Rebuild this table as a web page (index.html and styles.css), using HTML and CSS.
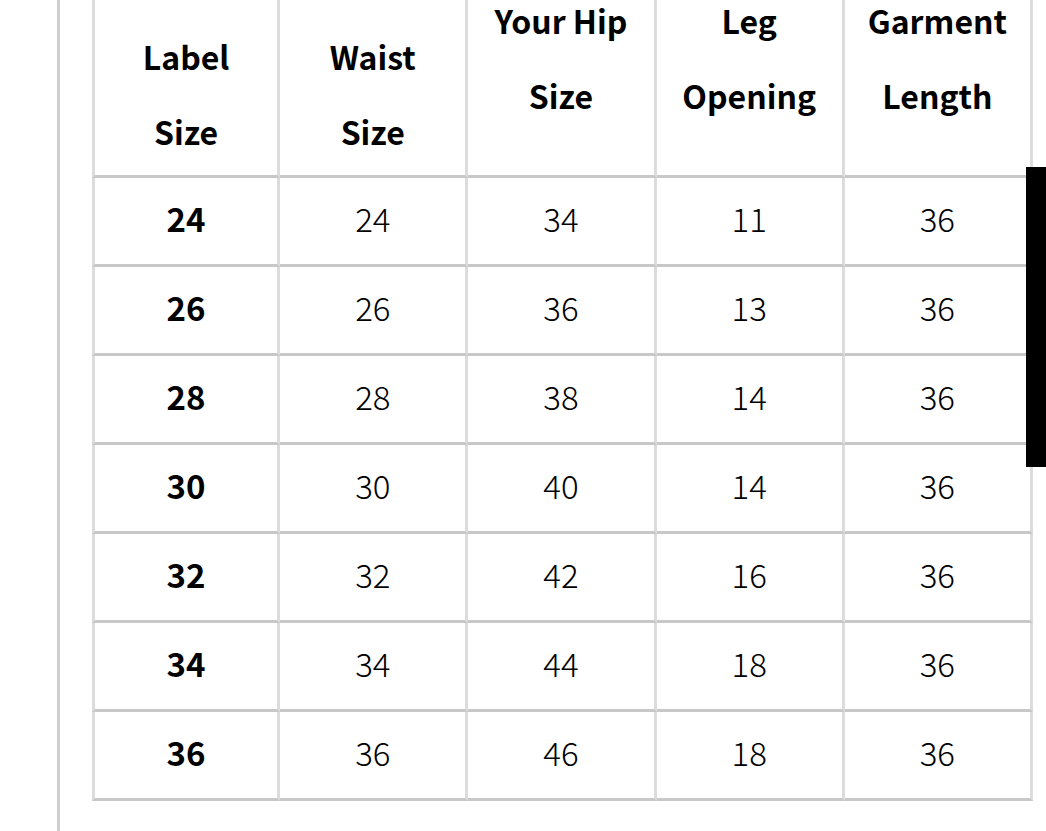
FILE: index.html
```html
<!DOCTYPE html>
<html lang="en">
<head>
<meta charset="utf-8">
<title>Size Chart</title>
<link rel="stylesheet" href="styles.css">
</head>
<body>
<div class="page">
  <table class="chart">
    <thead>
      <tr>
        <th class="low">Label<br>Size</th>
        <th class="low">Waist<br>Size</th>
        <th>Your Hip<br>Size</th>
        <th>Leg<br>Opening</th>
        <th>Garment<br>Length</th>
      </tr>
    </thead>
    <tbody>
      <tr><td class="lbl">24</td><td>24</td><td>34</td><td>11</td><td>36</td></tr>
      <tr><td class="lbl">26</td><td>26</td><td>36</td><td>13</td><td>36</td></tr>
      <tr><td class="lbl">28</td><td>28</td><td>38</td><td>14</td><td>36</td></tr>
      <tr><td class="lbl">30</td><td>30</td><td>40</td><td>14</td><td>36</td></tr>
      <tr><td class="lbl">32</td><td>32</td><td>42</td><td>16</td><td>36</td></tr>
      <tr><td class="lbl">34</td><td>34</td><td>44</td><td>18</td><td>36</td></tr>
      <tr><td class="lbl">36</td><td>36</td><td>46</td><td>18</td><td>36</td></tr>
    </tbody>
  </table>
</div>
<div class="scrollbar"></div>
</body>
</html>
```
FILE: styles.css
```css
html, body {
  margin: 0;
  padding: 0;
  background: #fff;
  overflow: hidden;
}
body {
  font-family: "Noto Sans CJK JP", "Noto Sans", sans-serif;
  color: #000;
}
.page {
  margin-left: 57px;
  border-left: 3px solid #cfcfcf;
  padding-left: 32px;
  min-height: 900px;
}
.chart {
  margin-top: -40px;
  width: 941px;
  table-layout: fixed;
  border-collapse: separate;
  border-spacing: 0;
}
.chart th,
.chart td {
  border-right: 3px solid #dcdcdc;
  border-bottom: 3px solid #c8c8c8;
  text-align: center;
  padding: 0;
}
.chart th:first-child,
.chart td:first-child {
  border-left: 3px solid #dcdcdc;
}
.chart th {
  font-size: 32px;
  font-weight: 700;
  line-height: 75px;
  vertical-align: top;
  height: 192px;
  padding-top: 23px;
}
.chart th.low {
  padding-top: 59px;
  height: 156px;
}
.chart td {
  height: 80px;
  padding-bottom: 6px;
  font-size: 33px;
  font-weight: 300;
  vertical-align: middle;
}
.chart td.lbl {
  font-weight: 700;
}
.scrollbar {
  position: fixed;
  right: 0;
  top: 167px;
  width: 20px;
  height: 300px;
  background: #000;
}
```
